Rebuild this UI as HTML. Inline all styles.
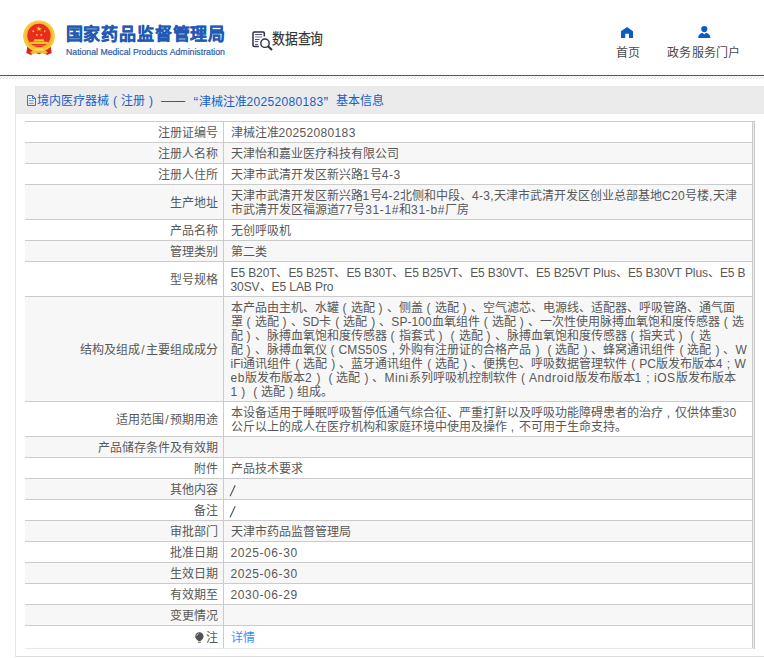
<!DOCTYPE html>
<html lang="zh-CN">
<head>
<meta charset="utf-8">
<title>国家药品监督管理局 数据查询</title>
<style>
*{box-sizing:border-box;margin:0;padding:0}
html,body{width:764px;height:658px;overflow:hidden;background:#fff}
body{font-family:"Liberation Sans",sans-serif;font-size:12px;color:#585858;position:relative;text-spacing-trim:space-all;font-kerning:none}
.abs{position:absolute;white-space:nowrap}
#hdr{position:absolute;left:0;top:0;width:764px;height:75px;background:#fff}
#blueline{position:absolute;left:0;top:75px;width:764px;height:1px;background:#0f60c8}
#hatch{position:absolute;left:0;top:76px;width:764px;height:3px}
#title-cn{left:65.5px;top:23px;font-size:17px;font-weight:bold;color:#2259b3;line-height:24px;letter-spacing:0.85px;-webkit-text-stroke:0.3px #2259b3}
#title-en{left:66px;top:47px;font-size:8.72px;color:#2c5db0;line-height:10px;-webkit-text-stroke:0.2px #2c5db0}
#dq{left:272px;top:29px;font-size:15px;line-height:20px;color:#333;-webkit-text-stroke:.2px #333;transform:scaleX(0.855);transform-origin:0 0}
.nav{font-size:12px;color:#4a4a4a;line-height:16px}
#panel{position:absolute;left:15px;top:86px;width:760px;height:571px;border-left:1px solid #e6e6e6;border-bottom:1px solid #dcdcdc;background:#fff}
#pbar{position:absolute;left:0;top:0;width:760px;height:28px;background:#ebebeb;border-bottom:1px solid #e3e8f3}
.pt{top:93px;font-size:12px;line-height:16px;color:#1a5cc8}
table{position:absolute;left:25px;top:121px;width:728px;border-collapse:collapse;table-layout:fixed}
td{border-top:1px solid #cbcbcb;padding:4px 0 2px 7px;line-height:14px;font-size:12px;vertical-align:middle;white-space:nowrap;overflow:hidden}
td.l{width:198px;text-align:right;border-right:1px solid #cbcbcb;padding:4px 5px 2px 0}
td.v{border-right:1px solid #cbcbcb}
tr:nth-child(even) td{background:#f7f7f7}
tr:last-child td{border-bottom:1px solid #e4e8f3;height:23px}
#tright{position:absolute;left:753px;top:121px;width:2px;height:528px;border-right:1px solid #c9c9c9;border-top:1px solid #c9c9c9;background:#e8ebf3}
a{color:#3b8cff;text-decoration:none}
.sl{padding:0 .9px}
i{font-style:normal;display:inline-block;width:12px;text-align:center;letter-spacing:0}
</style>
</head>
<body>
<div id="hdr"></div>
<div id="blueline"></div>
<svg id="hatch" width="764" height="3" viewBox="0 0 764 3" shape-rendering="crispEdges"><defs><pattern id="hp" width="3" height="3" patternUnits="userSpaceOnUse"><rect x="2" y="0" width="1" height="1" fill="#f4efe9"/><rect x="1" y="1" width="1" height="1" fill="#d6d6d6"/><rect x="0" y="2" width="1" height="1" fill="#dedede"/></pattern></defs><rect width="764" height="3" fill="url(#hp)"/></svg>

<svg class="abs" style="left:20px;top:17px" width="40" height="40" viewBox="20 17 40 40">
  <path d="M27.5 45.5 L26.3 53 L31 55 L34.5 52.5 L39 54.2 L43.5 52.5 L47 55 L51.7 53 L50.5 45.5 Z" fill="#d9261c"/>
  <path d="M30 52.6 L33 50.2 L39 52 L45 50.2 L48 52.6 L45.5 54 L39 52.8 L32.5 54 Z" fill="#f0b92a"/>
  <circle cx="39" cy="36.2" r="15.8" fill="#f3bf2c"/>
  <circle cx="39" cy="36.2" r="14.9" fill="none" stroke="#f8d24a" stroke-width="1"/>
  <circle cx="39" cy="35.5" r="11.7" fill="#e92b20"/>
  <path d="M39 26.2l.75 2.05h2.15l-1.72 1.3.64 2.08L39 29.78l-1.82 1.25.64-2.08-1.72-1.3h2.15z" fill="#f7cf3a"/>
  <circle cx="33.3" cy="31.2" r="0.95" fill="#f3c233"/><circle cx="44.7" cy="31.2" r="0.95" fill="#f3c233"/>
  <circle cx="36.8" cy="34.9" r="0.95" fill="#f3c233"/><circle cx="41.3" cy="34.9" r="0.95" fill="#f3c233"/>
  <path d="M34.4 39.2h9.2l.9 2.2H33.5z" fill="#f6c936"/>
  <path d="M30.4 41.8h17.2l1.2 2.2H29.2z" fill="#f4c230"/>
  <path d="M29.4 44.8h19.2v1H29.4z" fill="#f0a428" opacity=".6"/>
  <path d="M34 49q5-2.4 10 0l-1 2.2q-4-1.6-8 0z" fill="#f8d658"/>
</svg>
<div id="title-cn" class="abs">国家药品监督管理局</div>
<div id="title-en" class="abs">National Medical Products Administration</div>

<svg class="abs" style="left:250px;top:29px" width="24" height="23" viewBox="250 29 24 23">
  <path d="M264.3 36.6V33.2q0-1.2-1.2-1.2H254.2q-1.2 0-1.2 1.2V45.2q0 1.2 1.2 1.2H258.8" fill="none" stroke="#2f2e4b" stroke-width="1.5"/>
  <path d="M255 34.5h7.2M255 39.5h4.6M255 41.6h3.2M255 44.4h3.2" stroke="#3f3e5a" stroke-width="0.9"/>
  <path d="M255 36.9h7.2" stroke="#9c9bab" stroke-width="1.4"/>
  <circle cx="265" cy="43.2" r="4.2" fill="#fff" stroke="#2f2e4b" stroke-width="1.4"/>
  <path d="M268.3 46.4l3.2 3" stroke="#2f2e4b" stroke-width="2.1" stroke-linecap="round"/>
</svg>
<div id="dq" class="abs">数据查询</div>

<svg class="abs" style="left:621px;top:27px" width="12" height="11" viewBox="0 0 12 11">
  <path d="M6 0L12 4.3V11H8V6.8H4.2V11H0V4.3z" fill="#0d5bc6"/>
</svg>
<div class="abs nav" style="left:616px;top:45px">首页</div>
<svg class="abs" style="left:698px;top:26px" width="13" height="12" viewBox="0 0 13 12">
  <circle cx="6.3" cy="3.1" r="3.1" fill="#0d5bc6"/>
  <path d="M0.2 12c0-3 1.8-4.6 4.3-5.2L6.3 8.6 8.1 6.8c2.5.6 4.3 2.2 4.3 5.2z" fill="#0d5bc6"/>
</svg>
<div class="abs nav" style="left:667px;top:45px;letter-spacing:.25px">政务服务门户</div>

<div id="panel"><div id="pbar"></div></div>
<svg class="abs" style="left:27px;top:95px" width="9" height="11" viewBox="0 0 9 11">
  <path d="M.5.5h5.2l2.8 2.8v7.2h-8z" fill="none" stroke="#3a72d2" stroke-width="1"/>
  <path d="M5.5.8v2.7h2.7" fill="none" stroke="#3a72d2" stroke-width="1"/>
  <path d="M2 3.5h1.8M2 5.6h4.6M2 8.3h4.6" stroke="#5f88d8" stroke-width="0.9"/>
</svg>
<div class="abs pt" style="left:37px">境内医疗器械<i>(</i>注册<i>)</i></div>
<div class="abs pt" style="left:161px">——</div>
<div class="abs pt" style="left:193.5px;font-size:14px;top:93.5px">“</div>
<div class="abs pt" style="left:198.5px">津械注准<span style="letter-spacing:0.33px">20252080183</span><span style="font-size:14px;position:relative;top:.5px">”</span></div>
<div class="abs pt" style="left:336px">基本信息</div>

<table>
<tr><td class="l">注册证编号</td><td class="v"><span class="ln" id="L0">津械注准<span class="e" style="letter-spacing:0.34px">20252080183</span></span></td></tr>
<tr><td class="l">注册人名称</td><td class="v"><span class="ln" id="L1">天津怡和嘉业医疗科技有限公司</span></td></tr>
<tr><td class="l">注册人住所</td><td class="v"><span class="ln" id="L2">天津市武清开发区新兴路<span class="e" style="letter-spacing:0.54px">1</span>号<span class="e" style="letter-spacing:0.54px">4-3</span></span></td></tr>
<tr><td class="l">生产地址</td><td class="v"><span class="ln" id="L3">天津市武清开发区新兴路<span class="e" style="letter-spacing:0.35px">1</span>号<span class="e" style="letter-spacing:0.35px">4-2</span>北侧和中段、<span class="e" style="letter-spacing:0.35px">4-3,</span>天津市武清开发区创业总部基地<span class="e" style="letter-spacing:0.35px">C20</span>号楼<span class="e" style="letter-spacing:0.35px">,</span>天津</span><br><span class="ln" id="L4">市武清开发区福源道<span class="e" style="letter-spacing:0.65px">77</span>号<span class="e" style="letter-spacing:0.65px">31-1#</span>和<span class="e" style="letter-spacing:0.65px">31-b#</span>厂房</span></td></tr>
<tr><td class="l">产品名称</td><td class="v"><span class="ln" id="L5">无创呼吸机</span></td></tr>
<tr><td class="l">管理类别</td><td class="v"><span class="ln" id="L6">第二类</span></td></tr>
<tr><td class="l">型号规格</td><td class="v"><span class="ln" id="L7"><span class="e" style="letter-spacing:-0.11px">E5 B20T</span>、<span class="e" style="letter-spacing:-0.11px">E5 B25T</span>、<span class="e" style="letter-spacing:-0.11px">E5 B30T</span>、<span class="e" style="letter-spacing:-0.11px">E5 B25VT</span>、<span class="e" style="letter-spacing:-0.11px">E5 B30VT</span>、<span class="e" style="letter-spacing:-0.11px">E5 B25VT Plus</span>、<span class="e" style="letter-spacing:-0.11px">E5 B30VT Plus</span>、<span class="e" style="letter-spacing:-0.11px">E5 B</span></span><br><span class="ln" id="L8"><span class="e" style="letter-spacing:-0.08px">30SV</span>、<span class="e" style="letter-spacing:-0.08px">E5 LAB Pro</span></span></td></tr>
<tr><td class="l">结构及组成<span class="sl">/</span>主要组成成分</td><td class="v"><span class="ln" id="L9">本产品由主机、水罐<i>(</i>选配<i>)</i>、侧盖<i>(</i>选配<i>)</i>、空气滤芯、电源线、适配器、呼吸管路、通气面</span><br><span class="ln" id="L10">罩<i>(</i>选配<i>)</i>、<span class="e" style="letter-spacing:0.07px">SD</span>卡<i>(</i>选配<i>)</i>、<span class="e" style="letter-spacing:0.07px">SP-100</span>血氧组件<i>(</i>选配<i>)</i>、一次性使用脉搏血氧饱和度传感器<i>(</i>选</span><br><span class="ln" id="L11">配<i>)</i>、脉搏血氧饱和度传感器<i>(</i>指套式<i>)</i><i>(</i>选配<i>)</i>、脉搏血氧饱和度传感器<i>(</i>指夹式<i>)</i><i>(</i>选</span><br><span class="ln" id="L12">配<i>)</i>、脉搏血氧仪<i>(</i><span class="e" style="letter-spacing:0.15px">CMS50S</span><i>,</i>外购有注册证的合格产品<i>)</i><i>(</i>选配<i>)</i>、蜂窝通讯组件<i>(</i>选配<i>)</i>、<span class="e" style="letter-spacing:0.15px">W</span></span><br><span class="ln" id="L13"><span class="e" style="letter-spacing:-0.01px">iFi</span>通讯组件<i>(</i>选配<i>)</i>、蓝牙通讯组件<i>(</i>选配<i>)</i>、便携包、呼吸数据管理软件<i>(</i><span class="e" style="letter-spacing:-0.01px">PC</span>版发布版本<span class="e" style="letter-spacing:-0.01px">4</span><i>;</i><span class="e" style="letter-spacing:-0.01px">W</span></span><br><span class="ln" id="L14"><span class="e" style="letter-spacing:0.62px">eb</span>版发布版本<span class="e" style="letter-spacing:0.62px">2</span><i>)</i><i>(</i>选配<i>)</i>、<span class="e" style="letter-spacing:0.62px">Mini</span>系列呼吸机控制软件<i>(</i><span class="e" style="letter-spacing:0.62px">Android</span>版发布版本<span class="e" style="letter-spacing:0.62px">1</span><i>;</i><span class="e" style="letter-spacing:0.62px">iOS</span>版发布版本</span><br><span class="ln" id="L15"><span class="e">1</span><i>)</i><i>(</i>选配<i>)</i>组成。</span></td></tr>
<tr><td class="l">适用范围<span class="sl">/</span>预期用途</td><td class="v"><span class="ln" id="L16">本设备适用于睡眠呼吸暂停低通气综合征、严重打鼾以及呼吸功能障碍患者的治疗<i>,</i>仅供体重<span class="e" style="letter-spacing:0.42px">30</span></span><br><span class="ln" id="L17">公斤以上的成人在医疗机构和家庭环境中使用及操作<i>,</i>不可用于生命支持。</span></td></tr>
<tr><td class="l">产品储存条件及有效期</td><td class="v"><span class="ln" id="L18"></span></td></tr>
<tr><td class="l">附件</td><td class="v"><span class="ln" id="L19">产品技术要求</span></td></tr>
<tr><td class="l">其他内容</td><td class="v"><span style="position:relative;color:transparent">/<svg style="position:absolute;left:-1.7px;top:1px" width="8" height="13" viewBox="0 0 8 13"><path d="M1.1 12.2L6.2 1.2" stroke="#555" stroke-width="1.15" fill="none"/></svg></span></td></tr>
<tr><td class="l">备注</td><td class="v"><span style="position:relative;color:transparent">/<svg style="position:absolute;left:-1.7px;top:1px" width="8" height="13" viewBox="0 0 8 13"><path d="M1.1 12.2L6.2 1.2" stroke="#555" stroke-width="1.15" fill="none"/></svg></span></td></tr>
<tr><td class="l">审批部门</td><td class="v"><span class="ln" id="L22">天津市药品监督管理局</span></td></tr>
<tr><td class="l">批准日期</td><td class="v"><span class="ln" id="L23"><span class="e" style="letter-spacing:0.58px">2025-06-30</span></span></td></tr>
<tr><td class="l">生效日期</td><td class="v"><span class="ln" id="L24"><span class="e" style="letter-spacing:0.58px">2025-06-30</span></span></td></tr>
<tr><td class="l">有效期至</td><td class="v"><span class="ln" id="L25"><span class="e" style="letter-spacing:0.58px">2030-06-29</span></span></td></tr>
<tr><td class="l">变更情况</td><td class="v"><span class="ln" id="L26"></span></td></tr>
<tr><td class="l"><svg width="9" height="12" viewBox="0 0 9 12" style="vertical-align:-2px;margin-right:2px"><circle cx="4.4" cy="4.4" r="4.15" fill="#515156"/><path d="M2.4 7.6h4l-.7 1.7H3.1z" fill="#515156"/><path d="M1.7 3.9A3 3 0 0 1 4 1.6" fill="none" stroke="#d8dce0" stroke-width=".8"/><path d="M3.1 10.1h2.7v.8H3.1z" fill="#5a5a60"/></svg>注</td><td class="v"><a>详情</a></td></tr>
</table>
<div id="tright"></div>
</body>
</html>
